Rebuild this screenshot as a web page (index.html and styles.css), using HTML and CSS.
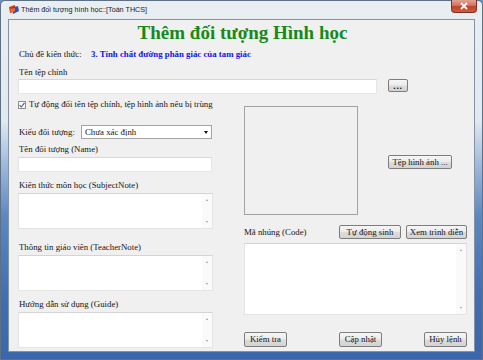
FILE: index.html
```html
<!DOCTYPE html>
<html lang="vi">
<head>
<meta charset="utf-8">
<title>Thêm đối tượng hình học</title>
<link rel="stylesheet" href="styles.css">
</head>
<body>
<div class="window">
  <div class="titlebar">
    <svg class="app-icon" width="10" height="10" viewBox="0 0 10 10">
      <polygon points="0,2 6,0 7,5 1,8" fill="#d8331c"/>
      <polygon points="3,3 9,1 10,6 4,9" fill="#2b52b8"/>
      <polygon points="1,4 6,3 6,6 2,8" fill="#f06a1e"/>
    </svg>
    <span class="title">Thêm đối tượng hình học::[Toán THCS]</span>
    <div class="close">
      <svg width="10" height="8" viewBox="0 0 10 8"><path d="M2 1 L8 7 M8 1 L2 7" stroke="#fff" stroke-width="1.8"/></svg>
    </div>
  </div>
  <div class="client">
    <h1 class="heading">Thêm đối tượng Hình học</h1>
    <div class="topic"><span class="topic-lbl">Chủ đề kiến thức:</span><span class="topic-val">3. Tính chất đường phân giác của tam giác</span></div>
    <div class="label l-file">Tên tệp chính</div>
    <div class="file-row">
      <div class="input file-input"></div>
      <div class="btn btn-dots">...</div>
    </div>
    <div class="cols">
      <div class="left">
        <div class="check-row">
          <span class="check"><svg width="6" height="6" viewBox="0 0 6 6"><path d="M0.5 3 L2.3 5 L5.5 0.8" fill="none" stroke="#3d5a9a" stroke-width="1.1"/></svg></span>
          <span>Tự động đổi tên tệp chính, tệp hình ảnh nếu bị trùng</span>
        </div>
        <div class="kind-row">
          <span class="kind-lbl">Kiểu đối tượng:</span>
          <div class="select"><span>Chưa xác định</span><span class="caret"></span></div>
        </div>
        <div class="label l-name">Tên đối tượng (Name)</div>
        <div class="input name-input"></div>
        <div class="label l-subject">Kiến thức môn học (SubjectNote)</div>
        <div class="textarea ta-small"><div class="scroll"><span class="up"></span><span class="down"></span></div></div>
        <div class="label l-teacher">Thông tin giáo viên (TeacherNote)</div>
        <div class="textarea ta-small"><div class="scroll"><span class="up"></span><span class="down"></span></div></div>
        <div class="label l-guide">Hướng dẫn sử dụng (Guide)</div>
        <div class="textarea ta-small"><div class="scroll"><span class="up"></span><span class="down"></span></div></div>
      </div>
      <div class="right">
        <div class="image-row">
          <div class="image-box"></div>
          <div class="btn btn-image">Tệp hình ảnh ...</div>
        </div>
        <div class="code-head">
          <span class="code-lbl">Mã nhúng (Code)</span>
          <div class="btn btn-gen">Tự động sinh</div>
          <div class="btn btn-preview">Xem trình diễn</div>
        </div>
        <div class="textarea ta-code"><div class="scroll"><span class="up"></span><span class="down"></span></div></div>
        <div class="actions">
          <div class="btn btn-act">Kiểm tra</div>
          <div class="btn btn-act btn-update">Cập nhật</div>
          <div class="btn btn-act btn-cancel">Hủy lệnh</div>
        </div>
      </div>
    </div>
  </div>
</div>
</body>
</html>
```

FILE: styles.css
```css
* { box-sizing: border-box; margin: 0; padding: 0; }
html, body { width: 483px; height: 360px; overflow: hidden; }
body {
  font-family: "Liberation Serif", "Times New Roman", serif;
  font-size: 8.8px;
  color: #151515;
  background: #6a8fc0;
}
.window {
  width: 483px;
  height: 360px;
  display: flex;
  flex-direction: column;
  border: 1px solid #5f6f84;
  border-radius: 5px 5px 0 0;
  background: linear-gradient(to bottom, #e9eef3 0, #e1e8ef 120px, #9db8db 165px, #5a88c3 215px, #3f6eb1 300px, #3a67aa 100%);
}
.titlebar {
  height: 18px;
  display: flex;
  align-items: center;
  padding-left: 8px;
}
.app-icon { flex: none; margin-top: -1px; }
.title {
  margin-left: 2px;
  font-family: "Liberation Sans", Arial, sans-serif;
  font-size: 7.2px;
  color: #1a1a1a;
  margin-top: -1px;
}
.close {
  margin-left: auto;
  margin-right: 5px;
  align-self: flex-start;
  margin-top: -1px;
  width: 26px;
  height: 13px;
  border: 1px solid #7a3328;
  border-top: none;
  border-radius: 0 0 4px 4px;
  background: linear-gradient(to bottom, #e3a294 0, #d47261 45%, #c2412c 55%, #cf5c3f 100%);
  display: flex;
  align-items: center;
  justify-content: center;
}
.client {
  flex: 1;
  margin: 0 7px 7px;
  border: 1px solid #8592a3;
  background: #f0f0f0;
  padding: 0 7px 0 9px;
  display: flex;
  flex-direction: column;
}
.heading {
  margin-top: 2px;
  height: 22px;
  line-height: 22px;
  text-align: center;
  font-size: 19px;
  font-weight: bold;
  color: #168a18;
}
.topic {
  margin-top: 5px;
  height: 11px;
  line-height: 11px;
  padding-left: 1px;
  display: flex;
}
.topic-lbl { width: 72px; flex: none; }
.topic-val { font-weight: bold; color: #1212e4; }
.label {
  height: 11px;
  line-height: 11px;
  padding-left: 1px;
}
.l-file { margin-top: 7px; }
.file-row {
  margin-top: 1px;
  display: flex;
  align-items: flex-start;
}
.input {
  background: #fff;
  border: 1px solid #e6e6e6;
  border-top-color: #d6d6d6;
  height: 15px;
}
.file-input { width: 359px; }
.btn {
  height: 14px;
  border: 1px solid #7d7d7d;
  border-radius: 2px;
  background: linear-gradient(to bottom, #f6f6f6 0, #ebebeb 48%, #dcdcdc 52%, #d3d3d3 100%);
  display: flex;
  align-items: center;
  justify-content: center;
  line-height: 11px;
  white-space: nowrap;
  color: #141414;
}
.btn-dots {
  margin-left: 11px;
  width: 20px;
  height: 13px;
  font-family: "Liberation Sans", Arial, sans-serif;
  font-size: 9px;
  font-weight: bold;
  letter-spacing: 0.6px;
  padding-top: 1px;
}
.cols {
  margin-top: 5px;
  display: grid;
  grid-template-columns: 195px 223px;
  column-gap: 31px;
}
.left, .right { display: flex; flex-direction: column; }
.check-row {
  height: 11px;
  line-height: 11px;
  display: flex;
  align-items: center;
  white-space: nowrap;
}
.check {
  width: 8px;
  height: 8px;
  flex: none;
  margin-right: 3px;
  border: 1px solid #8f8f8f;
  background: #fbfbfb;
  display: flex;
  align-items: center;
  justify-content: center;
}
.kind-row {
  margin-top: 15px;
  height: 14px;
  display: flex;
  align-items: center;
  line-height: 11px;
}
.kind-lbl { width: 63px; flex: none; padding-left: 1px; }
.select {
  width: 131px;
  height: 14px;
  background: #fff;
  border: 1px solid #a4a4a4;
  display: flex;
  align-items: center;
  padding-left: 3px;
  padding-right: 3px;
}
.caret {
  margin-left: auto;
  width: 0;
  height: 0;
  border-left: 2.5px solid transparent;
  border-right: 2.5px solid transparent;
  border-top: 3px solid #111;
}
.l-name { margin-top: 5px; }
.name-input { margin-top: 2px; width: 194px; }
.l-subject { margin-top: 8px; }
.l-teacher { margin-top: 13px; }
.l-guide { margin-top: 8px; }
.textarea {
  background: #fff;
  border: 1px solid #e4e4e4;
  border-top-color: #d4d4d4;
  display: flex;
  justify-content: flex-end;
}
.ta-small { margin-top: 2px; width: 195px; height: 36px; }
.scroll {
  width: 10px;
  height: 100%;
  background: #fafafa;
  display: flex;
  flex-direction: column;
  justify-content: space-between;
  align-items: center;
  padding: 5px 0 5px;
}
.up, .down { width: 0; height: 0; border-left: 1.5px solid transparent; border-right: 1.5px solid transparent; }
.up { border-bottom: 2px solid #9a9a9a; }
.down { border-top: 2px solid #9a9a9a; }
.image-row {
  margin-top: 7px;
  display: flex;
  align-items: flex-start;
}
.image-box {
  width: 114px;
  height: 109px;
  border: 1px solid #a3a3a3;
  background: #f0f0f0;
}
.btn-image {
  margin-left: 30px;
  margin-top: 49px;
  width: 64px;
}
.code-head {
  margin-top: 10px;
  height: 14px;
  display: flex;
  align-items: center;
  line-height: 11px;
}
.code-lbl { flex: none; }
.btn-gen { margin-left: auto; width: 62px; }
.btn-preview { margin-left: 5px; width: 61px; }
.ta-code { margin-top: 4px; height: 72px; }
.actions {
  margin-top: 17px;
  display: flex;
}
.btn-act { width: 43px; height: 15px; }
.btn-update { margin-left: 52px; }
.btn-cancel { margin-left: auto; }
```
